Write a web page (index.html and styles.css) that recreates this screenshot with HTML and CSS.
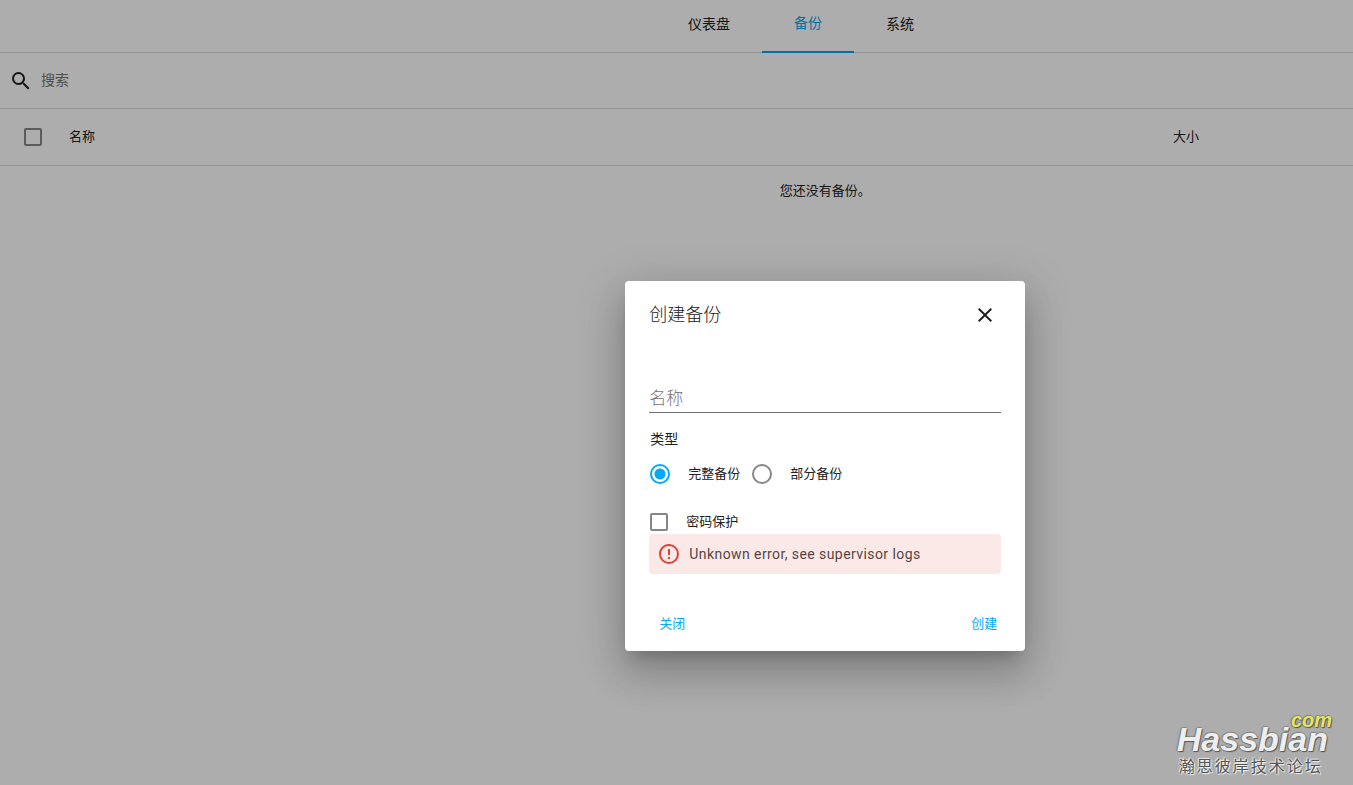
FILE: index.html
```
<!DOCTYPE html>
<html lang="zh-CN">
<head>
<meta charset="utf-8">
<title>备份</title>
<link rel="stylesheet" href="styles.css">
</head>
<body>
<div class="app">
  <header class="toolbar">
    <nav class="tabs">
      <a class="tab" href="#dashboard">仪表盘</a>
      <a class="tab tab-active" href="#backups">备份</a>
      <a class="tab" href="#system">系统</a>
    </nav>
  </header>
  <main>
    <div class="search">
      <svg class="icon" viewBox="0 0 24 24" aria-hidden="true"><path d="M9.5 3A6.5 6.5 0 0 1 16 9.500c0 1.610-.59 3.090-1.560 4.230l.27.27h.79l5 5-1.500 1.500-5-5v-.79l-.27-.27A6.516 6.516 0 0 1 9.500 16a6.500 6.500 0 0 1 0-13m0 2C7 5 5 7 5 9.500S7 14 9.500 14 14 12 14 9.500 12 5 9.500 5z"/></svg>
      <input class="search-input" type="text" placeholder="搜索" aria-label="搜索">
    </div>
    <table class="backups">
      <thead>
        <tr>
          <th class="col-check"><input class="checkbox" type="checkbox" aria-label="全选"></th>
          <th class="col-name">名称</th>
          <th class="col-size">大小</th>
        </tr>
      </thead>
      <tbody>
        <tr><td class="empty" colspan="3">您还没有备份。</td></tr>
      </tbody>
    </table>
  </main>
</div>
<div class="scrim">
  <form class="dialog" role="dialog" aria-labelledby="dialog-title">
    <div class="dialog-header">
      <h2 class="dialog-title" id="dialog-title">创建备份</h2>
      <button class="icon-button" type="button" aria-label="关闭对话框">
        <svg class="icon" viewBox="0 0 24 24" aria-hidden="true"><path d="M19 6.410L17.590 5 12 10.590 6.410 5 5 6.410 10.590 12 5 17.590 6.410 19 12 13.410 17.590 19 19 17.590 13.410 12z"/></svg>
      </button>
    </div>
    <div class="dialog-body">
      <input class="name-input" type="text" placeholder="名称" aria-label="名称">
      <fieldset class="types">
        <legend class="types-title">类型</legend>
        <label class="option"><input class="radio" type="radio" name="type" checked>完整备份</label>
        <label class="option"><input class="radio" type="radio" name="type">部分备份</label>
      </fieldset>
      <label class="option password"><input class="checkbox" type="checkbox">密码保护</label>
      <div class="alert" role="alert">
        <svg class="icon alert-icon" viewBox="0 0 24 24" aria-hidden="true"><path d="M11 15h2v2h-2v-2m0-8h2v6h-2V7m1-5C6.470 2 2 6.500 2 12a10 10 0 0 0 10 10 10 10 0 0 0 10-10A10 10 0 0 0 12 2m0 18a8 8 0 0 1-8-8 8 8 0 0 1 8-8 8 8 0 0 1 8 8 8 8 0 0 1-8 8z"/></svg>
        <span class="alert-text">Unknown error, see supervisor logs</span>
      </div>
    </div>
    <div class="dialog-actions">
      <button class="text-button" type="button">关闭</button>
      <button class="text-button" type="button">创建</button>
    </div>
  </form>
</div>
<div class="watermark">
  <span class="watermark-com">com</span>
  <span class="watermark-name">Hassbian</span>
  <span class="watermark-sub">瀚思彼岸技术论坛</span>
</div>
</body>
</html>
```
FILE: styles.css
```
* {
  box-sizing: border-box;
}

body {
  margin: 0;
  min-height: 100vh;
  position: relative;
  background: #fff;
  color: #212121;
  font: 14px/20px Roboto, "Noto Sans CJK SC", sans-serif;
}

button,
input {
  font: inherit;
  color: inherit;
}

.icon {
  flex: none;
  width: 24px;
  height: 24px;
  fill: currentColor;
}

.toolbar {
  display: flex;
  justify-content: center;
  height: 53px;
  padding-left: 18.4%;
  border-bottom: 1px solid #dedede;
}

.tabs {
  display: flex;
  height: 53px;
}

.tab {
  display: flex;
  align-items: center;
  padding: 0 32px 6px;
  color: inherit;
  text-decoration: none;
}

.tab-active {
  color: #03a9f4;
  border-bottom: 2px solid #03a9f4;
}

.search {
  display: flex;
  align-items: center;
  gap: 8px;
  height: 56px;
  padding: 0 9px;
  border-bottom: 1px solid #dedede;
}

.search-input {
  flex: 1;
  padding: 0 0 2px;
  border: 0;
  background: none;
  outline: none;
}

.search-input::placeholder,
.name-input::placeholder {
  color: #727272;
  opacity: 1;
}

.backups {
  width: 100%;
  table-layout: fixed;
  border-collapse: collapse;
  font-size: 13px;
}

.backups th {
  height: 56px;
  padding: 0 16px;
  font-weight: 400;
  text-align: left;
  border-bottom: 1px solid #dedede;
}

.backups .col-check {
  width: 53px;
  padding: 0 0 0 24px;
}

.backups .col-size {
  width: 196px;
}

.empty {
  height: 52px;
  padding: 0 0 0 22%;
  text-align: center;
}

.checkbox,
.radio {
  appearance: none;
  flex: none;
  display: block;
  margin: 0;
  border: 2px solid #868686;
  background: none;
}

.checkbox {
  width: 18px;
  height: 18px;
  border-radius: 2px;
}

.radio {
  width: 20px;
  height: 20px;
  border-radius: 50%;
}

.radio:checked {
  border-color: #03a9f4;
  background: radial-gradient(circle, #03a9f4 5px, transparent 6px);
}

.scrim {
  position: absolute;
  inset: 0;
  display: flex;
  justify-content: center;
  align-items: flex-start;
  padding: 281px 0 0 22%;
  background: rgba(0, 0, 0, 0.32);
}

.dialog {
  width: 400px;
  background: #fff;
  border-radius: 4px;
  box-shadow: 0 11px 15px -7px rgba(0, 0, 0, 0.2), 0 24px 38px 3px rgba(0, 0, 0, 0.14), 0 9px 46px 8px rgba(0, 0, 0, 0.12);
}

.dialog-header {
  display: flex;
  align-items: center;
  justify-content: space-between;
  height: 68px;
  padding: 0 16px 0 24px;
}

.dialog-title {
  margin: 0;
  font-size: 18px;
  line-height: 24px;
  font-weight: 300;
}

.icon-button {
  display: flex;
  align-items: center;
  justify-content: center;
  width: 48px;
  height: 48px;
  padding: 0;
  border: 0;
  background: none;
}

.dialog-body {
  padding: 32px 24px 0;
}

.name-input {
  display: block;
  width: 100%;
  height: 32px;
  padding: 2px 0 0;
  border: 0;
  border-bottom: 1px solid #727272;
  background: none;
  outline: none;
  font-size: 17px;
  font-weight: 300;
}

.types {
  display: flex;
  gap: 12px;
  margin: 16px 0 0;
  padding: 0 0 0 1px;
  border: 0;
}

.types-title {
  margin-bottom: 1px;
  padding: 0;
}

.option {
  display: flex;
  align-items: center;
  gap: 18px;
  height: 48px;
  font-size: 13px;
}

.password {
  height: 24px;
  margin: 12px 0 0 1px;
}

.alert {
  display: flex;
  align-items: center;
  gap: 8px;
  height: 40px;
  padding: 0 8px;
  border-radius: 4px;
  background: #fbe9e7;
}

.alert-icon {
  color: #db4437;
}

.alert-text {
  color: #574442;
  letter-spacing: 0.03em;
}

.dialog-actions {
  display: flex;
  justify-content: space-between;
  padding: 32px 20px 9px 26px;
}

.text-button {
  height: 36px;
  padding: 0 8px;
  border: 0;
  background: none;
  color: #03a9f4;
  font-size: 13px;
}

.watermark {
  position: absolute;
  right: 21px;
  bottom: 8px;
  display: flex;
  flex-direction: column;
  color: #eee;
  font-family: "Liberation Sans", "Noto Sans CJK SC", sans-serif;
  text-shadow: 1px 1px 1px #555, -1px 0 1px #777, 0 -1px 1px #888;
}

.watermark-com {
  align-self: flex-end;
  font: italic bold 20px/14px "Liberation Sans", sans-serif;
  color: #e5e45f;
}

.watermark-name {
  padding-right: 4px;
  font: italic bold 34px/24px "Liberation Sans", sans-serif;
}

.watermark-sub {
  margin: 6px 0 0 2px;
  font-size: 16px;
  line-height: 20px;
  letter-spacing: 2px;
  color: #555;
  text-shadow: 0 0 2px #fff, 1px 1px 1px #eee, -1px -1px 1px #ddd;
}
```
